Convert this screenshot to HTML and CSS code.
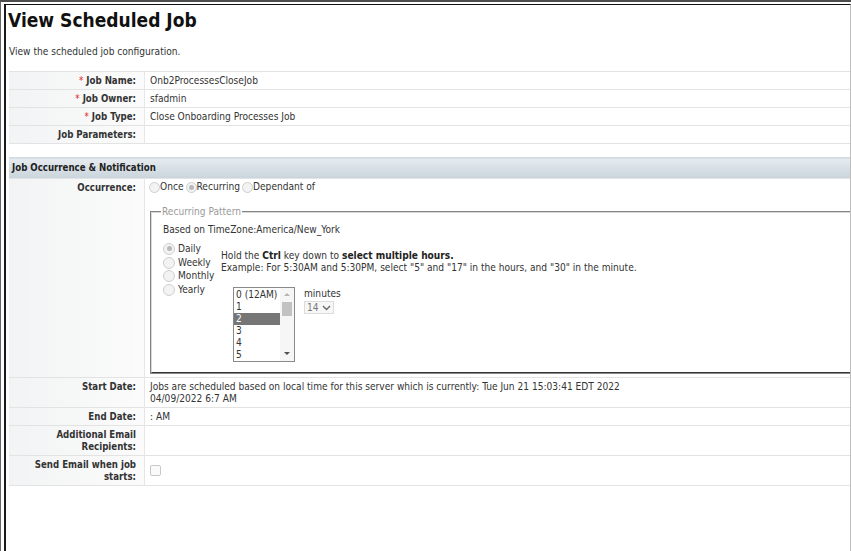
FILE: index.html
```html
<!DOCTYPE html>
<html>
<head>
<meta charset="utf-8">
<link rel="stylesheet" href="styles.css">
</head>
<body>
<div class="outer">
  <div class="page">
    <h1 class="title">View Scheduled Job</h1>
    <p class="intro">View the scheduled job configuration.</p>
    <table class="form">
      <tr><th><span class="req">*</span> Job Name:</th><td>Onb2ProcessesCloseJob</td></tr>
      <tr><th><span class="req">*</span> Job Owner:</th><td>sfadmin</td></tr>
      <tr><th><span class="req">*</span> Job Type:</th><td>Close Onboarding Processes Job</td></tr>
      <tr><th>Job Parameters:</th><td></td></tr>
      <tr class="spacer"><td colspan="2"></td></tr>
      <tr class="section"><td colspan="2">Job Occurrence &amp; Notification</td></tr>
      <tr class="occ">
        <th>Occurrence:</th>
        <td>
          <div class="occ-opts">
            <span class="radio"></span><span class="opt">Once</span>
            <span class="radio on"></span><span class="opt">Recurring</span>
            <span class="radio"></span><span class="opt">Dependant of</span>
          </div>
          <fieldset class="pattern">
            <legend>Recurring Pattern</legend>
            <div class="tz">Based on TimeZone:America/New_York</div>
            <div class="pattern-body">
              <div class="freq">
                <div class="freq-item"><span class="radio on"></span>Daily</div>
                <div class="freq-item"><span class="radio"></span>Weekly</div>
                <div class="freq-item"><span class="radio"></span>Monthly</div>
                <div class="freq-item"><span class="radio"></span>Yearly</div>
              </div>
              <div class="hours">
                <div class="instr">Hold the <b>Ctrl</b> key down to <b>select multiple hours.</b></div>
                <div class="instr">Example: For 5:30AM and 5:30PM, select "5" and "17" in the hours, and "30" in the minute.</div>
                <div class="pick">
                  <div class="listbox">
                    <div class="items">
                      <div class="item">0 (12AM)</div>
                      <div class="item">1</div>
                      <div class="item sel">2</div>
                      <div class="item">3</div>
                      <div class="item">4</div>
                      <div class="item">5</div>
                    </div>
                    <div class="scroll">
                      <span class="arr up"></span>
                      <span class="thumb"></span>
                      <span class="arr down"></span>
                    </div>
                  </div>
                  <div class="mins">
                    <div>minutes</div>
                    <div class="minsel">14 <svg width="9" height="6" viewBox="0 0 9 6"><path d="M1 1 L4.5 4.5 L8 1" fill="none" stroke="#666" stroke-width="1.4"/></svg></div>
                  </div>
                </div>
              </div>
            </div>
          </fieldset>
        </td>
      </tr>
      <tr class="two"><th>Start Date:</th><td>Jobs are scheduled based on local time for this server which is currently: Tue Jun 21 15:03:41 EDT 2022<br>04/09/2022 6:7 AM</td></tr>
      <tr><th>End Date:</th><td>: AM</td></tr>
      <tr class="two"><th>Additional Email Recipients:</th><td></td></tr>
      <tr class="two"><th>Send Email when job starts:</th><td class="mid"><span class="check"></span></td></tr>
    </table>
  </div>
</div>
</body>
</html>
```
FILE: styles.css
```css
html, body {
  margin: 0;
  padding: 0;
  background: #fff;
}
body {
  font-family: "DejaVu Sans Condensed", "DejaVu Sans", sans-serif;
  font-stretch: condensed;
  font-size: 10.1px;
  color: #333;
}
.outer {
  height: 551px;
  box-sizing: border-box;
  border-top: 2px solid #4d4d4d;
  border-left: 1px solid #666;
  padding: 2px 0 0 3px;
}
.page {
  height: 100%;
  box-sizing: border-box;
  border-top: 1px solid #111;
  border-left: 2px solid #1a1a1a;
  border-right: 1px solid #bdbdbd;
  padding-left: 2px;
  overflow: hidden;
}
.title {
  margin: 0;
  padding: 3px 0 0 0;
  font-size: 19px;
  line-height: 24px;
  font-weight: bold;
  color: #111;
}
.intro {
  margin: 0;
  padding: 14px 0 0 1px;
  line-height: 12px;
  color: #333;
  height: 25px;
  box-sizing: content-box;
}
.form {
  width: 100%;
  border-collapse: collapse;
  margin-left: 1px;
}
.form th, .form td {
  border-top: 1px solid #e3e3e3;
  padding: 3px 5px 2px 5px;
  line-height: 12px;
  vertical-align: top;
}
.form th {
  width: 122px;
  padding-right: 8px;
  text-align: right;
  font-size: 9.6px;
  font-weight: bold;
  color: #333;
  background: linear-gradient(to right, #f2f3f4, #fbfbfb);
  border-right: 1px solid #e6e6e6;
}
.form td {
  text-align: left;
  color: #333;
}
.form tr:last-child th, .form tr:last-child td {
  border-bottom: 1px solid #e3e3e3;
}
.req {
  color: #d22;
  font-weight: normal;
}
.form .spacer td {
  height: 13px;
  padding: 0;
}
.form .section td {
  background: linear-gradient(to bottom, #e6ebef, #c9d4dc);
  border-top: 1px solid #d5dde3;
  padding: 4px 3px 4px 3px;
  font-size: 9.6px;
  font-weight: bold;
  color: #222;
}
.form .occ td {
  padding: 2px 0 3px 4px;
}
.occ-opts {
  display: flex;
  align-items: center;
  height: 12px;
}
.radio {
  display: inline-block;
  width: 9px;
  height: 9px;
  border: 1px solid #cfcfcf;
  border-radius: 50%;
  background: #f3f3f3;
  position: relative;
  flex: none;
}
.radio.on::after {
  content: "";
  position: absolute;
  left: 2px;
  top: 2px;
  width: 5px;
  height: 5px;
  border-radius: 50%;
  background: #b9b9b9;
}
.opt {
  margin: 0 2px 0 0;
}
.pattern {
  margin: 13px -6px 0 1px;
  padding: 6px 12px 10px 11px;
  border: 2px groove #d8d8d8;
  border-bottom-color: #888;
}
.pattern legend {
  color: #9a9a9a;
  padding: 0 1px;
  margin-left: -2px;
  line-height: 12px;
}
.tz {
  line-height: 12px;
}
.pattern-body {
  display: flex;
  margin-top: 6px;
}
.freq {
  width: 58px;
  flex: none;
}
.freq-item {
  display: flex;
  align-items: center;
  height: 13.7px;
  gap: 3px;
}
.freq-item .radio {
  width: 10px;
  height: 10px;
}
.freq-item .radio.on::after {
  left: 2.5px;
  top: 2.5px;
}
.hours {
  padding-top: 8px;
}
.instr {
  line-height: 12px;
  white-space: nowrap;
}
.instr b {
  color: #222;
}
.pick {
  display: flex;
  margin: 13px 0 0 12px;
  gap: 9px;
}
.listbox {
  display: flex;
  width: 60px;
  height: 73px;
  border: 1px solid #8a8a8a;
  background: #fff;
}
.items {
  flex: 1;
  padding-top: 1px;
}
.item {
  line-height: 12px;
  height: 12px;
  padding-left: 2px;
  color: #333;
}
.item.sel {
  background: #767676;
  color: #fff;
}
.scroll {
  width: 14px;
  position: relative;
  background: #f6f6f6;
}
.thumb {
  position: absolute;
  left: 2px;
  top: 14px;
  width: 10px;
  height: 14px;
  background: #c2c2c2;
}
.arr {
  position: absolute;
  left: 4px;
  width: 0;
  height: 0;
  border-left: 3px solid transparent;
  border-right: 3px solid transparent;
}
.arr.up {
  top: 5px;
  border-bottom: 3px solid #b5b5b5;
}
.arr.down {
  bottom: 6px;
  border-top: 3px solid #505050;
}
.mins {
  line-height: 12px;
  padding-top: 1px;
}
.minsel {
  display: inline-flex;
  align-items: center;
  gap: 3px;
  margin-top: 1px;
  padding: 0 2px;
  height: 11px;
  border: 1px solid #dcdcdc;
  background: #f7f7f7;
  color: #777;
}
.form .mid {
  vertical-align: middle;
}
.check {
  display: inline-block;
  width: 9px;
  height: 9px;
  border: 1px solid #c8c8c8;
  border-radius: 2px;
  background: #fafafa;
  margin-top: 2px;
}
```
